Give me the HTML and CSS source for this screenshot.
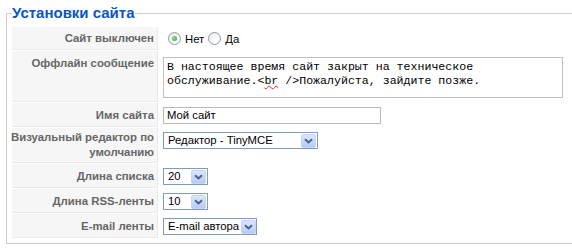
FILE: index.html
```html
<!DOCTYPE html>
<html lang="ru">
<head>
  <meta charset="UTF-8" />
  <title>Установки сайта</title>
  <link rel="stylesheet" href="styles.css">
</head>
<body>

  <fieldset class="panel">
    <legend>Установки сайта</legend>
    <div class="settings">
      <div class="key">Сайт выключен</div>
      <div class="value radios">
        <span class="radio"><span class="dot checked"></span>Нет</span>
        <span class="radio"><span class="dot"></span>Да</span>
      </div>

      <div class="key key-top">Оффлайн сообщение</div>
      <div class="value value-area">
        <div class="textarea">В настоящее время сайт закрыт на техническое<br>обслуживание.&lt;<span class="misspelled">br</span> /&gt;Пожалуйста, зайдите позже.</div>
      </div>

      <div class="key">Имя сайта</div>
      <div class="value"><div class="input">Мой сайт</div></div>

      <div class="key key-wide"><span>Визуальный редактор по<br>умолчанию</span></div>
      <div class="value value-top">
        <div class="select select-editor"><span class="text">Редактор - TinyMCE</span><span class="arrow"><svg width="9" height="6" viewBox="0 0 9 6"><path d="M1 1.2 L4.5 4.5 L8 1.2" fill="none" stroke="#4d6185" stroke-width="2"/></svg></span></div>
      </div>

      <div class="key">Длина списка</div>
      <div class="value">
        <div class="select select-num"><span class="text">20</span><span class="arrow"><svg width="9" height="6" viewBox="0 0 9 6"><path d="M1 1.2 L4.5 4.5 L8 1.2" fill="none" stroke="#4d6185" stroke-width="2"/></svg></span></div>
      </div>

      <div class="key">Длина RSS-ленты</div>
      <div class="value">
        <div class="select select-num"><span class="text">10</span><span class="arrow"><svg width="9" height="6" viewBox="0 0 9 6"><path d="M1 1.2 L4.5 4.5 L8 1.2" fill="none" stroke="#4d6185" stroke-width="2"/></svg></span></div>
      </div>

      <div class="key">E-mail ленты</div>
      <div class="value">
        <div class="select select-mail"><span class="text">E-mail автора</span><span class="arrow"><svg width="9" height="6" viewBox="0 0 9 6"><path d="M1 1.2 L4.5 4.5 L8 1.2" fill="none" stroke="#4d6185" stroke-width="2"/></svg></span></div>
      </div>
    </div>
  </fieldset>

</body>
</html>
```

FILE: styles.css
```css
* {
  box-sizing: border-box;
}
body {
  margin: 0;
  padding: 4px 0 0 6px;
  background: #fff;
  font-family: 'Liberation Sans', Arial, sans-serif;
  font-size: 11.3px;
  overflow: hidden;
}
.panel {
  margin: 0 -20px 0 0;
  border: 1px solid #ccc;
  padding: 5px 5px 5px 5px;
}
.panel legend {
  padding: 0;
  color: #0b55c4;
  font-size: 15px;
  font-weight: bold;
  line-height: 18px;
}
.settings {
  display: grid;
  grid-template-columns: 146px 1fr;
  column-gap: 1px;
  row-gap: 1px;
}
.key {
  background: #f6f6f6;
  border-bottom: 1px solid #e9e9e9;
  border-right: 1px solid #e9e9e9;
  color: #666;
  font-size: 11.4px;
  font-weight: bold;
  line-height: 14px;
  text-align: right;
  padding: 2px 3px 2px 2px;
  display: flex;
  align-items: center;
  justify-content: flex-end;
}
.key-top {
  align-items: flex-start;
  padding-top: 5px;
}
.key-wide span {
  white-space: nowrap;
  line-height: 15px;
}
.value {
  padding: 4px 4px 3px;
  display: flex;
  align-items: center;
}
.value-top {
  align-items: flex-start;
}
.value-area {
  padding: 6px 4px 4px;
}
.radios {
  gap: 4px;
  padding: 5px 4px 5px 9px;
}
.radio {
  display: inline-flex;
  align-items: center;
  gap: 4px;
  color: #000;
}
.dot {
  width: 13px;
  height: 13px;
  border: 1px solid #8e9cac;
  border-radius: 50%;
  background: radial-gradient(circle at 60% 65%, #fff 20%, #e2e2dc 100%);
  display: inline-flex;
  align-items: center;
  justify-content: center;
}
.dot.checked::after {
  content: '';
  width: 5px;
  height: 5px;
  border-radius: 50%;
  background: radial-gradient(circle at 40% 40%, #8ee58e, #23a023);
}
.textarea {
  width: 400px;
  height: 41px;
  border: 1px solid #c0c0c0;
  padding: 2px 3px;
  font-family: 'Liberation Mono', 'Courier New', monospace;
  font-size: 11.6px;
  line-height: 14px;
  color: #000;
}
.misspelled {
  text-decoration: underline wavy #e02020;
  text-decoration-thickness: 1px;
}
.input {
  width: 218px;
  height: 17px;
  border: 1px solid #b8b8b8;
  padding: 0 3px;
  line-height: 15px;
  color: #000;
}
.select {
  display: flex;
  align-items: center;
  height: 17px;
  border: 1px solid #7f9db9;
  background: #fff;
  padding: 0 1px 0 4px;
  color: #000;
}
.select .text {
  flex: 1;
  line-height: 15px;
  white-space: nowrap;
}
.select .arrow {
  flex: none;
  width: 15px;
  height: 14px;
  margin-left: 2px;
  border: 1px solid #c3d3fd;
  border-radius: 2px;
  background: linear-gradient(#dbe6fe, #b7cbf6);
  display: flex;
  align-items: center;
  justify-content: center;
}
.select-editor {
  width: 155px;
}
.select-num {
  width: 45px;
}
.select-mail {
  width: 94px;
}
```
